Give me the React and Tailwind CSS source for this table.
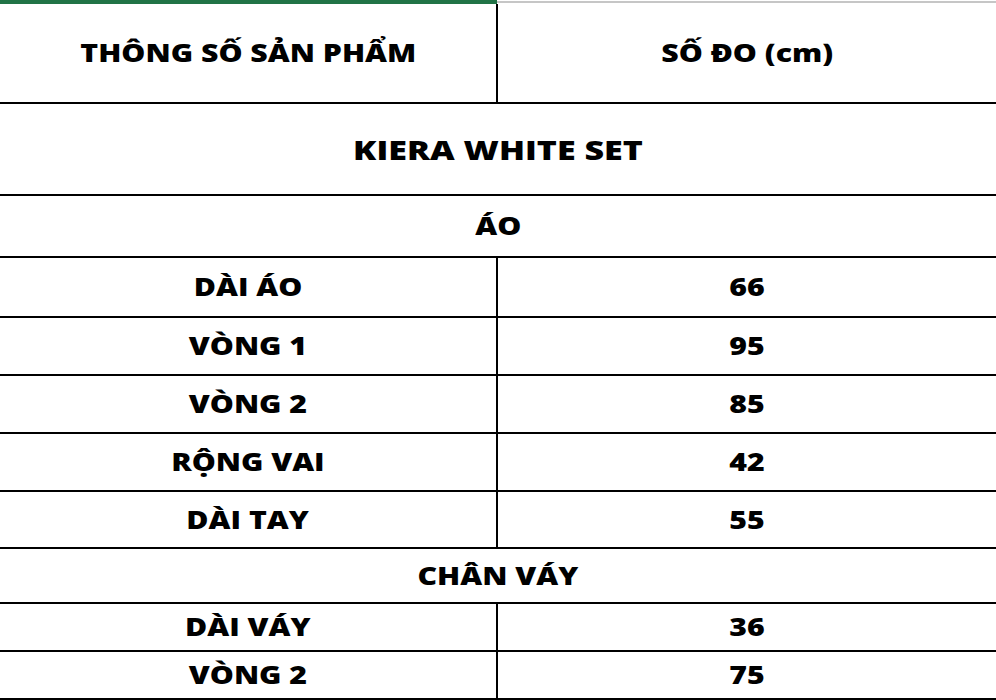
const rows = [
  { label: "DÀI ÁO", value: "66", h: "h-[60px]" },
  { label: "VÒNG 1", value: "95", h: "h-[58px]" },
  { label: "VÒNG 2", value: "85", h: "h-[58px]" },
  { label: "RỘNG VAI", value: "42", h: "h-[58px]" },
  { label: "DÀI TAY", value: "55", h: "h-[57px]" },
];

const skirtRows = [
  { label: "DÀI VÁY", value: "36", h: "h-[48px]" },
  { label: "VÒNG 2", value: "75", h: "h-[48px]" },
];

const Txt = ({ children, big }) => (
  <span className={`inline-block scale-x-[1.26] whitespace-pre ${big ? "text-[27px]" : ""}`}>
    {children}
  </span>
);

const PairRow = ({ label, value, h }) => (
  <div className={`flex ${h} border-b-2 border-black`}>
    <div className="w-[498px] border-r-2 border-black flex items-center justify-center">
      <Txt>{label}</Txt>
    </div>
    <div className="flex-1 flex items-center justify-center">
      <Txt>{value}</Txt>
    </div>
  </div>
);

const FullRow = ({ children, h, big }) => (
  <div className={`${h} border-b-2 border-black flex items-center justify-center`}>
    <Txt big={big}>{children}</Txt>
  </div>
);

export default function App() {
  return (
    <div
      className="w-[996px] h-[700px] overflow-hidden bg-white text-black font-extrabold text-[24px] leading-none"
      style={{ fontFamily: '"Open Sans", "DejaVu Sans", sans-serif' }}
    >
      <div className="flex h-[4px]">
        <div className="w-[497px] bg-[#217346]" />
        <div className="flex-1 mt-[1px] h-[2px] bg-[#c6c6c6]" />
      </div>
      <div className="flex h-[100px] border-b-2 border-black">
        <div className="w-[498px] border-r-2 border-black flex items-center justify-center">
          <Txt>THÔNG SỐ SẢN PHẨM</Txt>
        </div>
        <div className="flex-1 flex items-center justify-center">
          <Txt>SỐ ĐO (cm)</Txt>
        </div>
      </div>
      <FullRow h="h-[92px]" big>KIERA WHITE SET</FullRow>
      <FullRow h="h-[62px]">ÁO</FullRow>
      {rows.map((r) => (
        <PairRow key={r.label} {...r} />
      ))}
      <FullRow h="h-[55px]">CHÂN VÁY</FullRow>
      {skirtRows.map((r) => (
        <PairRow key={r.label} {...r} />
      ))}
    </div>
  );
}
